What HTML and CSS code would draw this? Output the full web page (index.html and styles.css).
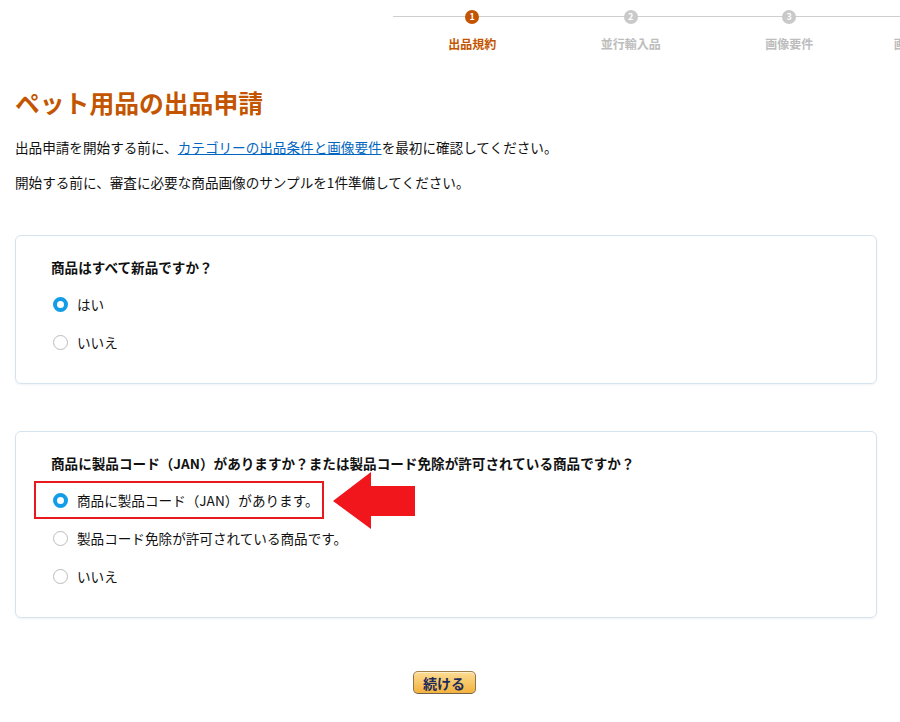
FILE: index.html
```html
<!DOCTYPE html>
<html lang="ja">
<head>
    <meta charset="UTF-8">
    <title>ペット用品の出品申請</title>
    <link rel="stylesheet" href="styles.css">
</head>
<body>
    <div class="header">
        <ol class="steps">
            <li class="step active"><span class="num">1</span><span class="label">出品規約</span></li>
            <li class="step"><span class="num">2</span><span class="label">並行輸入品</span></li>
            <li class="step"><span class="num">3</span><span class="label">画像要件</span></li>
            <li class="step"><span class="num">4</span><span class="label">画像のアップロード</span></li>
        </ol>
    </div>

    <h1>ペット用品の出品申請</h1>
    <p class="intro">出品申請を開始する前に、<a href="#">カテゴリーの出品条件と画像要件</a>を最初に確認してください。</p>
    <p class="intro second">開始する前に、審査に必要な商品画像のサンプルを1件準備してください。</p>

    <div class="card">
        <div class="question">商品はすべて新品ですか？</div>
        <label class="option"><input type="radio" name="new" checked> はい</label>
        <label class="option"><input type="radio" name="new"> いいえ</label>
    </div>

    <div class="card second">
        <div class="question">商品に製品コード（JAN）がありますか？または製品コード免除が許可されている商品ですか？</div>
        <label class="option highlight"><input type="radio" name="code" checked> 商品に製品コード（JAN）があります。
            <svg class="callout" width="83" height="58" viewBox="0 0 83 58">
                <polygon points="0,29 38,0 38,14 82,14 82,44 38,44 38,57" fill="#f0161c"/>
            </svg>
        </label>
        <label class="option"><input type="radio" name="code"> 製品コード免除が許可されている商品です。</label>
        <label class="option"><input type="radio" name="code"> いいえ</label>
    </div>

    <div class="actions">
        <button>続ける</button>
    </div>
</body>
</html>
```

FILE: styles.css
```css
body {
    margin: 0;
    background: #fff;
    color: #111;
    font-family: "Noto Sans CJK JP", "Noto Sans", sans-serif;
    font-size: 13.6px;
}
.header {
    height: 60px;
    overflow: hidden;
}
.steps {
    display: flex;
    list-style: none;
    margin: 0 0 0 393px;
    padding: 0;
    width: 634px;
    background: linear-gradient(#cfcfcf, #cfcfcf) 0 16px / 100% 1px no-repeat;
}
.step {
    flex: none;
    width: 158.5px;
    display: flex;
    flex-direction: column;
    align-items: center;
}
.num {
    margin-top: 10px;
    width: 14px;
    height: 14px;
    border-radius: 50%;
    background: #c9c9c9;
    color: #fff;
    font-size: 9px;
    font-weight: 700;
    line-height: 14px;
    text-align: center;
}
.label {
    margin-top: 12px;
    font-size: 12px;
    line-height: 16px;
    font-weight: 700;
    color: #bdbdbd;
    white-space: nowrap;
}
.step.active .num {
    background: #c45500;
}
.step.active .label {
    color: #c45500;
}
h1 {
    margin: 27px 0 0 15px;
    font-size: 24.8px;
    line-height: 30px;
    font-weight: 700;
    color: #c45500;
}
.intro {
    margin: 20px 0 0 15px;
    line-height: 20px;
}
.intro.second {
    margin-top: 15px;
}
.intro a {
    color: #0066c0;
    text-decoration: underline;
}
.card {
    margin: 43px 0 0 15px;
    width: 862px;
    box-sizing: border-box;
    padding: 21px 35px 31px;
    border: 1px solid #d5e3ee;
    border-radius: 6px;
    box-shadow: 0 1px 2px rgba(120, 150, 180, 0.12);
    display: flex;
    flex-direction: column;
    align-items: flex-start;
    gap: 18px;
}
.card.second {
    margin-top: 47px;
}
.question {
    font-weight: 700;
    line-height: 20px;
    margin-bottom: -1px;
}
.option {
    position: relative;
    display: inline-flex;
    align-items: center;
    line-height: 20px;
}
.option input {
    appearance: none;
    margin: 0 9px 0 2px;
    width: 15px;
    height: 15px;
    border: 1px solid #bcbcbc;
    border-radius: 50%;
    background: #fff;
    box-sizing: border-box;
}
.option input:checked {
    border: 4.5px solid #139de9;
    background: #fff;
}
.option.highlight::before {
    content: "";
    position: absolute;
    left: -17px;
    top: -9px;
    width: 290px;
    height: 38px;
    box-sizing: border-box;
    border: 2px solid #e8191f;
}
.callout {
    position: absolute;
    left: 282px;
    top: -18px;
}
.actions {
    margin: 53px 0 0 13px;
    width: 862px;
    text-align: center;
}
.actions button {
    width: 63px;
    height: 23px;
    padding: 0;
    font-family: inherit;
    font-size: 14px;
    line-height: 20px;
    font-weight: 700;
    color: #1d2a5a;
    background: linear-gradient(#fbdc94, #f3b23d);
    border: 1px solid;
    border-color: #a2834a #8f7445 #6f6050;
    border-radius: 5px;
    box-shadow: 0 1px 0 rgba(255, 255, 255, 0.5) inset;
}
```
